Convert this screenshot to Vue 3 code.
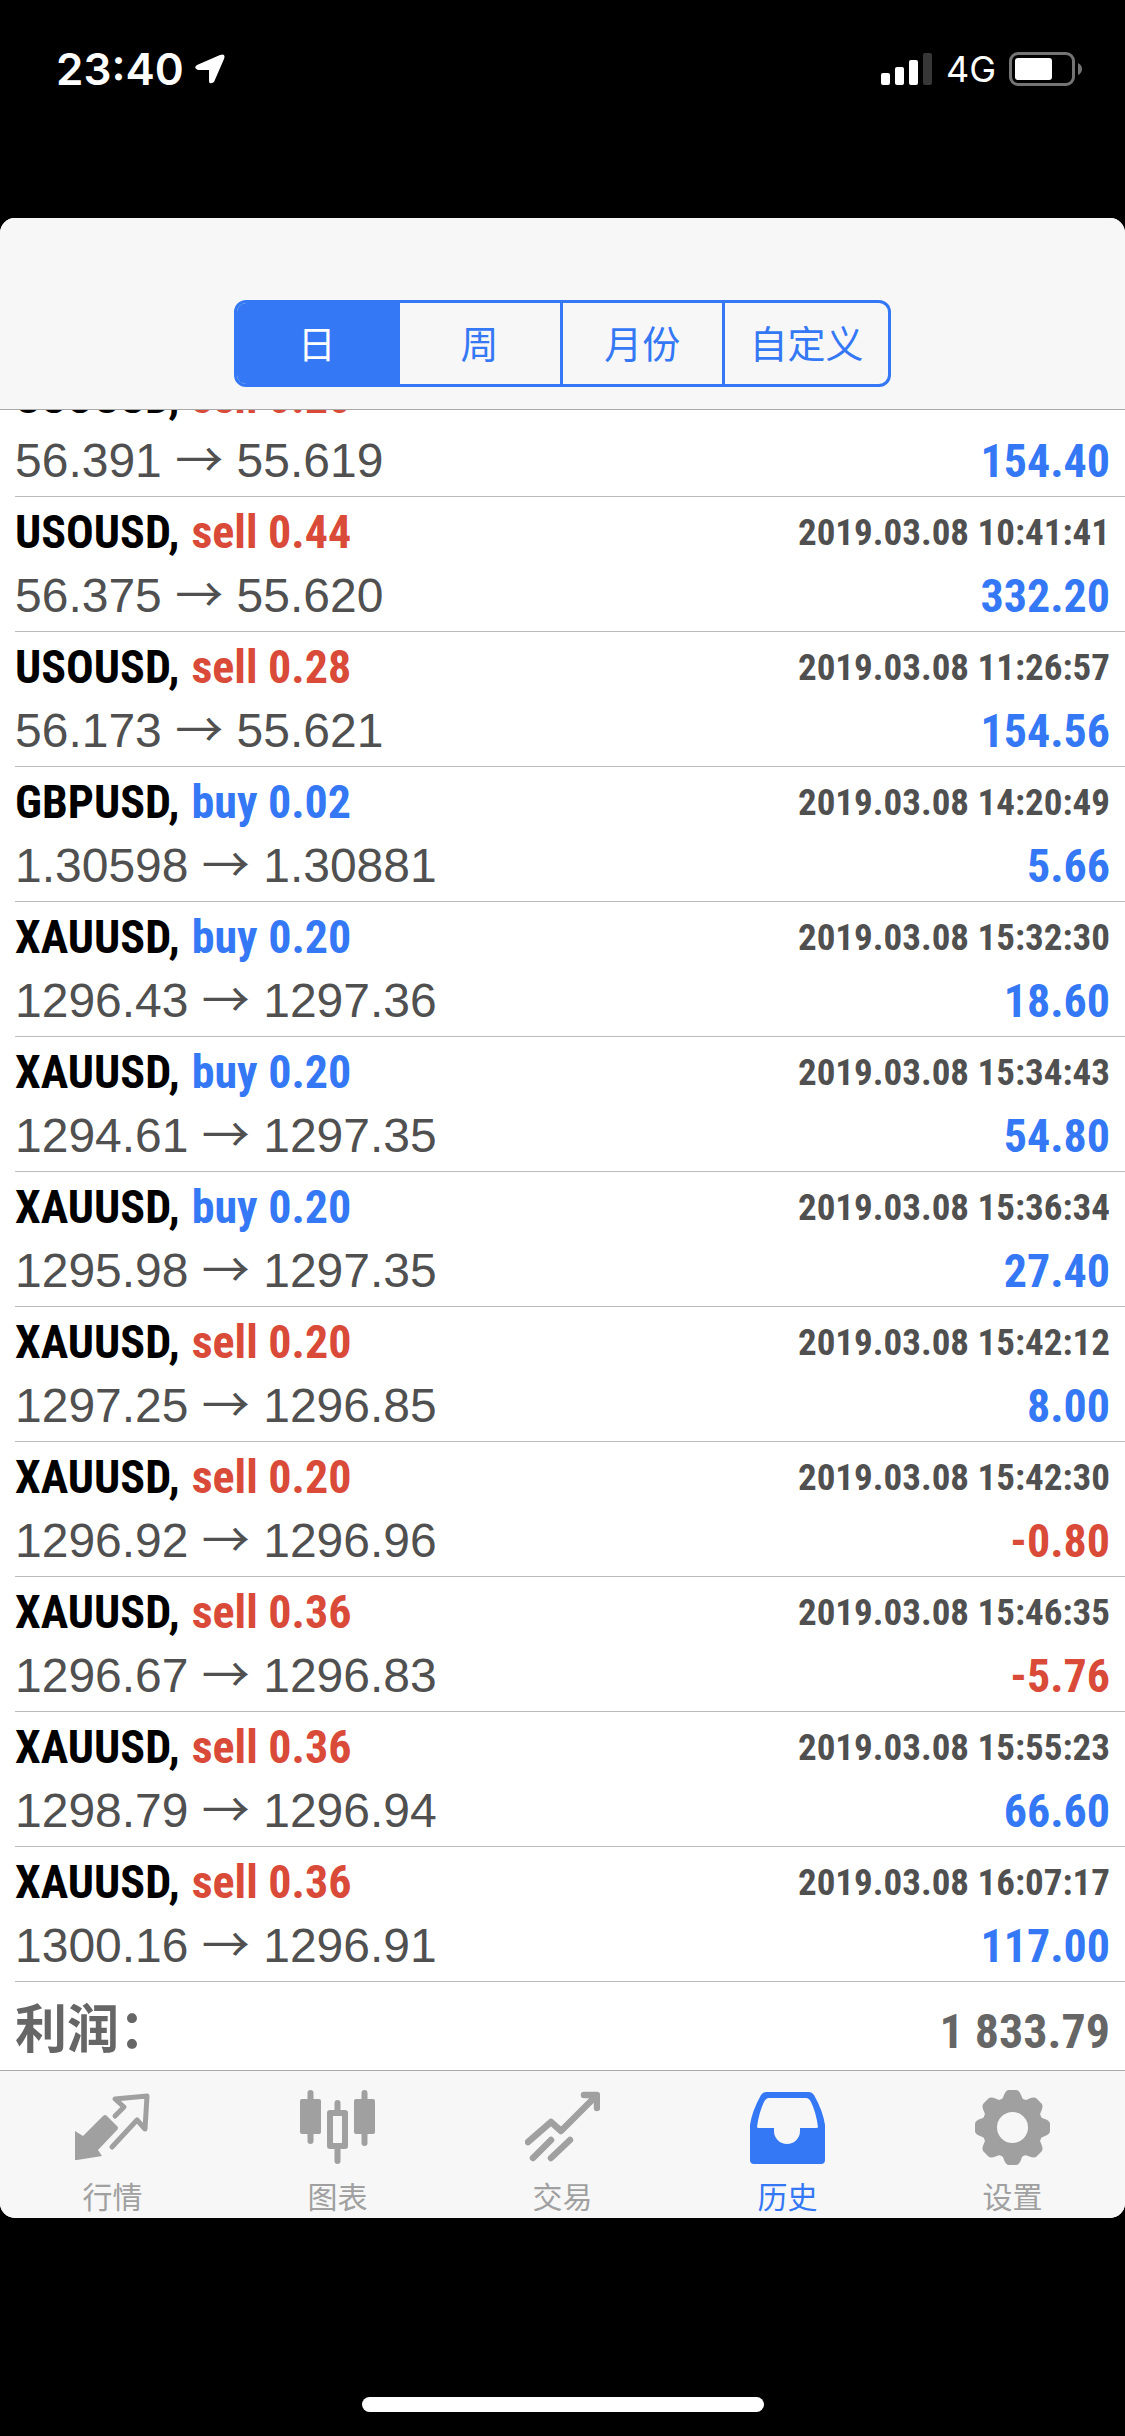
<script setup>
import { ref } from 'vue'

const periods = ['日', '周', '月份', '自定义']
const period = ref('日')

const deals = [
  ['USOUSD', 'sell', '0.20', '56.391', '55.619', '2019.03.08 09:27:31', '154.40'],
  ['USOUSD', 'sell', '0.44', '56.375', '55.620', '2019.03.08 10:41:41', '332.20'],
  ['USOUSD', 'sell', '0.28', '56.173', '55.621', '2019.03.08 11:26:57', '154.56'],
  ['GBPUSD', 'buy', '0.02', '1.30598', '1.30881', '2019.03.08 14:20:49', '5.66'],
  ['XAUUSD', 'buy', '0.20', '1296.43', '1297.36', '2019.03.08 15:32:30', '18.60'],
  ['XAUUSD', 'buy', '0.20', '1294.61', '1297.35', '2019.03.08 15:34:43', '54.80'],
  ['XAUUSD', 'buy', '0.20', '1295.98', '1297.35', '2019.03.08 15:36:34', '27.40'],
  ['XAUUSD', 'sell', '0.20', '1297.25', '1296.85', '2019.03.08 15:42:12', '8.00'],
  ['XAUUSD', 'sell', '0.20', '1296.92', '1296.96', '2019.03.08 15:42:30', '-0.80'],
  ['XAUUSD', 'sell', '0.36', '1296.67', '1296.83', '2019.03.08 15:46:35', '-5.76'],
  ['XAUUSD', 'sell', '0.36', '1298.79', '1296.94', '2019.03.08 15:55:23', '66.60'],
  ['XAUUSD', 'sell', '0.36', '1300.16', '1296.91', '2019.03.08 16:07:17', '117.00'],
].map(([symbol, side, volume, open, close, time, profit]) => ({
  symbol, side, volume, open, close, time, profit,
}))

const tabs = [
  { id: 'quotes', label: '行情' },
  { id: 'charts', label: '图表' },
  { id: 'trade', label: '交易' },
  { id: 'history', label: '历史' },
  { id: 'settings', label: '设置' },
]
const tab = ref('history')
const teeth = [0, 45, 90, 135, 180, 225, 270, 315]
</script>

<template>
  <div class="screen">
    <div class="status">
      <div class="clock">
        <span>23:40</span>
        <svg width="30" height="30" viewBox="0 0 30 30">
          <path d="M2 11 L25 1 Q31 -1 29 5 L19 28 Q14 31 14 27 V16 H3 Q-2 14 2 11Z" fill="#fff" />
        </svg>
      </div>
      <div class="signals">
        <svg width="52" height="32" viewBox="0 0 52 32">
          <rect x="0" y="20" width="9" height="12" rx="2" fill="#fff" />
          <rect x="14" y="14" width="9" height="18" rx="2" fill="#fff" />
          <rect x="28" y="7" width="9" height="25" rx="2" fill="#fff" />
          <rect x="42" y="0" width="9" height="32" rx="2" fill="#373737" />
        </svg>
        <span class="network">4G</span>
        <svg width="74" height="34" viewBox="0 0 74 34">
          <rect x="1.5" y="1.5" width="63" height="31" rx="7.5" fill="none" stroke="#747474" stroke-width="3" />
          <rect x="6" y="6" width="37" height="22" rx="3" fill="#fff" />
          <path d="M69 11 Q73 13 73 17 Q73 21 69 23Z" fill="#747474" />
        </svg>
      </div>
    </div>

    <div class="sheet">
      <header class="top">
        <div class="segments" role="group" aria-label="周期">
          <button
            v-for="p in periods"
            :key="p"
            type="button"
            :class="{ on: p === period }"
            :aria-pressed="p === period"
            @click="period = p"
          >{{ p }}</button>
        </div>
      </header>

      <main class="history">
        <ul class="deals">
          <li v-for="d in deals" :key="d.time" class="deal">
            <div class="line">
              <span class="title">
                <span class="symbol">{{ d.symbol }},</span>
                <span :class="d.side">{{ d.side }} {{ d.volume }}</span>
              </span>
              <time class="time">{{ d.time }}</time>
            </div>
            <div class="line">
              <span class="prices">{{ d.open }} <span class="arrow">→</span> {{ d.close }}</span>
              <span class="profit" :class="{ loss: d.profit.startsWith('-') }">{{ d.profit }}</span>
            </div>
          </li>
        </ul>
        <div class="total">
          <span class="total-label">利润：</span>
          <span class="total-value">1 833.79</span>
        </div>
      </main>

      <nav class="tabs">
        <button
          v-for="t in tabs"
          :key="t.id"
          type="button"
          :class="{ on: t.id === tab }"
          @click="tab = t.id"
        >
          <svg width="75" height="75" viewBox="0 0 75 75" fill="none" stroke="currentColor">
            <template v-if="t.id === 'quotes'">
              <path d="M0 41 L8 46 L28 26 Q30 24 32 26 L42 36 Q44 38 42 40 L23 60 L27 66 L2 70 H0Z" fill="currentColor" stroke="none" />
              <path d="M40 26 L49 17 L40 9 L72 6 L70 39 L62 30 L37 57" stroke-width="5" stroke-linecap="round" stroke-linejoin="round" />
            </template>
            <template v-else-if="t.id === 'charts'">
              <path d="M10.5 3 V51 M64.5 3 V53 M37.5 13 V20 M37.5 59 V71" stroke-width="6" stroke-linecap="round" />
              <rect x="0" y="9" width="21" height="35" rx="2" fill="currentColor" stroke="none" />
              <rect x="54" y="9" width="21" height="35" rx="2" fill="currentColor" stroke="none" />
              <rect x="30" y="23" width="15" height="33" stroke-width="6" stroke-linejoin="round" />
            </template>
            <template v-else-if="t.id === 'trade'">
              <path d="M3 52 L26 32 L36 41 L71 6 M59 5 H72 V18 M8 68 L26 50 M26 68 L45 50" stroke-width="6.5" stroke-linecap="round" stroke-linejoin="round" />
            </template>
            <template v-else-if="t.id === 'history'">
              <path
                fill="currentColor"
                stroke="none"
                fill-rule="evenodd"
                d="M16 2 H59 Q62 2 64 5 Q73 21 75 35 V70 Q75 74 71 74 H4 Q0 74 0 70 V35 Q2 21 11 5 Q13 2 16 2Z M19 8 Q16 8 14 12 Q9 22 7 37 Q7 38 9 38 H24 V41 A13 13 0 0 0 50 41 V38 H66 Q68 38 68 37 Q66 22 61 12 Q59 8 56 8Z"
              />
            </template>
            <template v-else>
              <circle cx="37.5" cy="37.5" r="23" stroke-width="15" />
              <path
                v-for="a in teeth"
                :key="a"
                :transform="`rotate(${a} 37.5 37.5)`"
                d="M25 11 Q28 9 29 5 Q31 0 34 0 H41 Q44 0 46 5 Q47 9 50 11 L46 18 H29Z"
                fill="currentColor"
                stroke="none"
              />
            </template>
          </svg>
          <span>{{ t.label }}</span>
        </button>
      </nav>
    </div>

    <div class="home"><span class="home-bar"></span></div>
  </div>
</template>

<style>
body {
  margin: 0;
  background: #000;
}
</style>

<style scoped>
.screen {
  display: flex;
  flex-direction: column;
  height: 100vh;
  background: #000;
  color: #505050;
  font-family: "Liberation Sans", "Noto Sans CJK SC", sans-serif;
}

.status {
  display: flex;
  flex: none;
  justify-content: space-between;
  align-items: flex-start;
  height: 170px;
  padding: 48px 42px 0 56px;
  color: #fff;
  font-family: Inter, sans-serif;
}
.clock,
.signals {
  display: flex;
  align-items: center;
  height: 42px;
}
.clock {
  gap: 11px;
  font-size: 44px;
  font-weight: 600;
}
.network {
  margin: 0 13px;
  font-size: 36px;
  font-weight: 400;
}

.sheet {
  display: flex;
  flex: 1 1 0;
  flex-direction: column;
  min-height: 0;
  overflow: hidden;
  border-radius: 15px;
  background: #fff;
}

.top {
  display: flex;
  flex: none;
  justify-content: center;
  padding: 82px 16px 22px;
  border-bottom: 1px solid #a9a9a9;
  background: #f7f7f7;
}
.segments {
  display: flex;
  width: 657px;
  height: 87px;
  box-sizing: border-box;
  overflow: hidden;
  border: 3px solid #3478f6;
  border-radius: 12px;
}
.segments button {
  display: flex;
  flex: none;
  justify-content: center;
  width: 25%;
  box-sizing: border-box;
  padding: 0;
  border: 0;
  border-right: 3px solid #3478f6;
  background: none;
  color: #3478f6;
  font: 38px/78px "Noto Sans CJK SC", sans-serif;
}
.segments button:last-child {
  border-right: 0;
}
.segments button.on {
  background: #3478f6;
  color: #fff;
}

.history {
  display: flex;
  flex: 1 1 0;
  flex-direction: column;
  justify-content: flex-end;
  min-height: 0;
  overflow: hidden;
}
.deals {
  margin: 0;
  padding: 0 0 0 15px;
  list-style: none;
}
.deal {
  padding: 4px 15px 4px 0;
  border-bottom: 1px solid #bcbcc0;
}
.line {
  display: flex;
  justify-content: space-between;
  align-items: baseline;
  height: 63px;
  font-size: 48px;
  line-height: 63px;
  white-space: nowrap;
}
.title,
.time,
.profit,
.total-value {
  font-family: "Roboto Condensed", "Liberation Sans Narrow", sans-serif;
  font-weight: 700;
}
.title {
  display: flex;
  gap: 12px;
  font-size: 46px;
}
.symbol {
  color: #000;
}
.sell {
  color: #d94a38;
}
.buy,
.profit {
  color: #3478f6;
}
.profit {
  font-size: 46px;
}
.profit.loss {
  color: #d94a38;
}
.time {
  align-self: flex-start;
  font-size: 37px;
}
.arrow {
  font-family: "Noto Sans CJK SC", sans-serif;
  line-height: 1;
}

.total {
  display: flex;
  flex: none;
  justify-content: space-between;
  align-items: baseline;
  height: 88px;
  padding: 0 15px;
  color: #666;
  line-height: 88px;
}
.total-label {
  font-family: "Noto Sans CJK SC", sans-serif;
  font-size: 52px;
  font-weight: 700;
}
.total-value {
  font-size: 48px;
}

.tabs {
  display: flex;
  flex: none;
  height: 147px;
  border-top: 1px solid #a9a9a9;
  background: #f7f7f7;
}
.tabs button {
  display: flex;
  flex: 1 1 0;
  flex-direction: column;
  gap: 12px;
  align-items: center;
  padding: 19px 0 0;
  border: 0;
  background: none;
  color: #a0a0a0;
  font: 30px/36px "Noto Sans CJK SC", sans-serif;
}
.tabs button.on {
  color: #3478f6;
}

.home {
  display: flex;
  flex: none;
  justify-content: center;
  align-items: flex-end;
  height: 194px;
  padding-bottom: 24px;
}
.home-bar {
  width: 402px;
  height: 15px;
  border-radius: 8px;
  background: #fff;
}
</style>
